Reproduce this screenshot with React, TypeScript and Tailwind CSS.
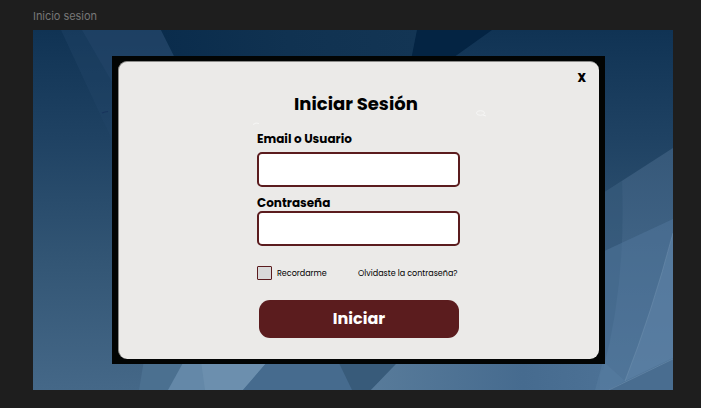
function Backdrop() {
  return (
    <svg className="absolute inset-0 h-full w-full" viewBox="33 30 640 360" preserveAspectRatio="none" aria-hidden="true">
      <defs>
        <linearGradient id="sky" x1="0" y1="0" x2="0" y2="1">
          <stop offset="0" stopColor="#103354" />
          <stop offset="0.3" stopColor="#1f4263" />
          <stop offset="0.65" stopColor="#335675" />
          <stop offset="1" stopColor="#456888" />
        </linearGradient>
        <linearGradient id="ray" x1="0" y1="0" x2="0" y2="1">
          <stop offset="0" stopColor="#365879" />
          <stop offset="1" stopColor="#4d7295" />
        </linearGradient>
        <linearGradient id="shade" x1="0" y1="0" x2="1" y2="0">
          <stop offset="0" stopColor="#0a2c4c" />
          <stop offset="0.5" stopColor="#103251" />
          <stop offset="1" stopColor="#133554" />
        </linearGradient>
        <linearGradient id="floor" x1="0" y1="0" x2="1" y2="0">
          <stop offset="0" stopColor="#587b9a" />
          <stop offset="0.65" stopColor="#466b8f" />
          <stop offset="1" stopColor="#4c7195" />
        </linearGradient>
      </defs>
      <rect x="33" y="30" width="640" height="360" fill="url(#sky)" />
      <path d="M61 30H161L176 60V140H112Z" fill="#22456a" opacity=".4" />
      <path d="M82 30H161L180 68V140L112 82Z" fill="#24456a" opacity=".5" />
      <path d="M161 30H417L411 60H176Z" fill="url(#shade)" />
      <path d="M417 30H492L450 60H411Z" fill="#042443" />
      <path d="M102 113L105 112L108 111.500" stroke="#18345c" strokeWidth="1.200" fill="none" />
      <path d="M600 195L673 148V390H600Z" fill="url(#ray)" />
      <path d="M600 195L622 181Q626 285 603 370H600Z" fill="#294c6d" opacity=".35" />
      <path d="M600 253L673 219V390H595Z" fill="#557b9f" opacity=".45" />
      <path d="M673 233Q652 312 625 381L673 358Z" fill="#6286aa" opacity=".5" />
      <path d="M144 360H390L370 390H139Z" fill="#4b7090" />
      <path d="M184 361H268L243 390H168Z" fill="#6488a8" />
      <path d="M201 361H268L243 390H205Z" fill="#7093b1" opacity=".65" />
      <path d="M268 361H400L371 390H243Z" fill="#466b8e" />
      <path d="M338 361H399L371 390H352Z" fill="#385b7a" />
      <path d="M399 361H605L595 390H371Z" fill="url(#floor)" />
      <path d="M603 361L595 390H609L625 381Z" fill="#587da1" opacity=".5" />
      <path d="M609 390L673 359V390Z" fill="#496d90" />
      <path d="M609 390L673 359M625 381Q652 312 673 233" stroke="#7898b5" strokeWidth=".6" opacity=".7" fill="none" />
    </svg>
  );
}

function Glints() {
  return (
    <svg className="pointer-events-none absolute inset-0 h-full w-full" viewBox="112 56 493 308" fill="none" stroke="#f6f6f5" aria-hidden="true">
      <path d="M253 124.500L256 123L259 123.500" />
      <ellipse cx="480.500" cy="113" rx="4" ry="2.300" />
      <path d="M483 115L486 116" />
    </svg>
  );
}

export default function App() {
  return (
    <main className="h-[408px] w-[701px] overflow-hidden bg-[#1e1e1e] pl-[33px] font-['Poppins','Inter',sans-serif] text-black">
      <p className="h-[30px] pt-[9px] font-['Inter',sans-serif] text-[11px] leading-[15px] tracking-[-0.05px] text-[#777777]">Inicio sesion</p>
      <section className="relative flex h-[360px] w-[640px] pl-[79px] pt-[26px]">
        <Backdrop />
        <div className="relative h-[308px] w-[493px] bg-[#020403] px-[6px] pt-[5px]">
          <form className="flex h-[298px] flex-col rounded-[9px] border-l border-t border-[#8b8b89] bg-[#ebeae8] pl-[138px] pr-[13px]">
            <div className="flex h-[29px] justify-end pt-[8px]">
              <button type="button" aria-label="Cerrar" className="h-4 text-[11.500px] font-extrabold leading-4">X</button>
            </div>
            <h1 className="h-[39px] w-[200px] whitespace-nowrap pl-[37px] pt-px text-[18px] font-bold leading-[23px]">Iniciar Sesión</h1>
            <label htmlFor="user" className="h-[22px] whitespace-nowrap text-[12px] font-bold leading-[18px]">Email o Usuario</label>
            <input id="user" className="h-[35px] w-[203px] shrink-0 rounded-[5px] border-2 border-[#5b1c1e] bg-white" />
            <label htmlFor="pass" className="h-[24px] whitespace-nowrap pt-[7px] text-[12px] font-bold leading-[18px]">Contraseña</label>
            <input id="pass" type="password" className="h-[35px] w-[203px] shrink-0 rounded-[5px] border-2 border-[#5b1c1e] bg-white" />
            <div className="mt-[20px] flex h-[14px] w-[203px] items-center whitespace-nowrap text-[8px] leading-[14px]">
              <span className="h-[14px] w-[15px] shrink-0 rounded-[1px] border border-[#5b1c1e] bg-[#d9d9d9]" />
              <span className="ml-[5px] pt-px">Recordarme</span>
              <a className="ml-auto mr-[2.500px] pt-px">Olvidaste la contraseña?</a>
            </div>
            <button type="button" className="ml-[2px] mt-[20px] h-[37.500px] w-[200px] shrink-0 rounded-[11px] bg-[#5b1c1e] pt-px text-[16px] font-bold text-white">Iniciar</button>
          </form>
          <Glints />
        </div>
      </section>
    </main>
  );
}
